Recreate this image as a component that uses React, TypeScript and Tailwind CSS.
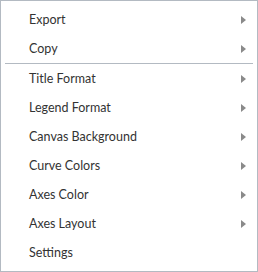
const groups: { label: string; sub: boolean }[][] = [
  [
    { label: 'Export', sub: true },
    { label: 'Copy', sub: true },
  ],
  [
    { label: 'Title Format', sub: true },
    { label: 'Legend Format', sub: true },
    { label: 'Canvas Background', sub: true },
    { label: 'Curve Colors', sub: true },
    { label: 'Axes Color', sub: true },
    { label: 'Axes Layout', sub: true },
    { label: 'Settings', sub: false },
  ],
];

function MenuItem({ label, sub }: { label: string; sub: boolean }) {
  return (
    <div className="flex h-[29px] items-center justify-between pl-6 pr-[7px] text-[12.5px] text-[#333]">
      <span className="pt-px">{label}</span>
      {sub && (
        <svg width="5" height="8" viewBox="0 0 5 8">
          <path d="M0 0 L5 4 L0 8 Z" fill="#8a8a8a" />
        </svg>
      )}
    </div>
  );
}

export default function App() {
  return (
    <div
      className="h-[272px] w-[258px] border border-[#b3bac2] bg-white p-1"
      style={{ fontFamily: "Lato, 'Noto Sans', sans-serif" }}
    >
      {groups.map((items, i) => (
        <div key={i} className={i > 0 ? 'border-t border-[#b3bac2]' : ''}>
          {items.map((item) => (
            <MenuItem key={item.label} {...item} />
          ))}
        </div>
      ))}
    </div>
  );
}
